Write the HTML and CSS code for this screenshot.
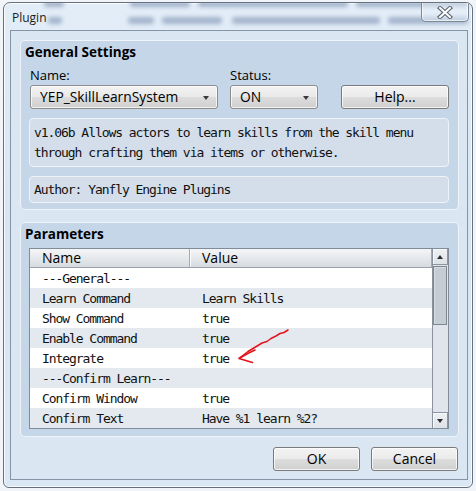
FILE: index.html
```html
<!DOCTYPE html>
<html>
<head>
<meta charset="utf-8">
<title>Plugin</title>
<link rel="stylesheet" href="styles.css">
</head>
<body>
<div class="window">
  <!-- the desktop behind, smeared by the glass title bar -->
  <div class="backdrop" aria-hidden="true">
    <span class="smudge s1"></span>
    <span class="smudge s2"></span>
    <span class="smudge s3"></span>
    <span class="smudge s4"></span>
    <span class="smudge s5"></span>
    <span class="smudge s6"></span>
    <span class="smudge s7"></span>
    <span class="smudge s8"></span>
    <span class="smudge s9"></span>
  </div>

  <div class="titlebar">
    <span class="title">Plugin</span>
  </div>
  <div class="close">
    <svg width="16" height="13" viewBox="0 0 16 13">
      <path d="M3 2 L13 11 M13 2 L3 11" stroke="#5d6671" stroke-width="4.2" stroke-linecap="square" fill="none"/>
      <path d="M3 2 L13 11 M13 2 L3 11" stroke="#ffffff" stroke-width="2" stroke-linecap="square" fill="none"/>
    </svg>
  </div>

  <div class="client">
    <section class="group general">
      <h2>General Settings</h2>
      <div class="fields">
        <div class="field f-name">
          <label>Name:</label>
          <div class="combo">YEP_SkillLearnSystem<span class="caret"></span></div>
        </div>
        <div class="field f-status">
          <label>Status:</label>
          <div class="combo">ON<span class="caret"></span></div>
        </div>
        <button class="btn help">Help...</button>
      </div>
      <div class="textbox desc">v1.06b Allows actors to learn skills from the skill menu<br>through crafting them via items or otherwise.</div>
      <div class="textbox author">Author: Yanfly Engine Plugins</div>
    </section>

    <section class="group params">
      <h2>Parameters</h2>
      <div class="table">
        <div class="grid">
          <div class="row head"><div class="cell">Name</div><div class="cell">Value</div></div>
          <div class="row"><div class="cell">---General---</div><div class="cell"></div></div>
          <div class="row alt"><div class="cell">Learn Command</div><div class="cell">Learn Skills</div></div>
          <div class="row"><div class="cell">Show Command</div><div class="cell">true</div></div>
          <div class="row alt"><div class="cell">Enable Command</div><div class="cell">true</div></div>
          <div class="row"><div class="cell">Integrate</div><div class="cell">true</div></div>
          <div class="row alt"><div class="cell">---Confirm Learn---</div><div class="cell"></div></div>
          <div class="row"><div class="cell">Confirm Window</div><div class="cell">true</div></div>
          <div class="row alt"><div class="cell">Confirm Text</div><div class="cell">Have %1 learn %2?</div></div>
        </div>
        <div class="scrollbar">
          <div class="sb-btn"><span class="tri up"></span></div>
          <div class="sb-thumb"></div>
          <div class="sb-track"></div>
          <div class="sb-btn"><span class="tri down"></span></div>
        </div>
      </div>
    </section>

    <div class="actions">
      <button class="btn">OK</button>
      <button class="btn">Cancel</button>
    </div>
  </div>
</div>

<!-- hand-drawn red marker pointing at the Integrate value -->
<svg class="marker" width="476" height="491" viewBox="0 0 476 491">
  <path d="M288 330 L284 332.5 L280 333.5 L276 336 L271 338.5 L267 341.5 L262 343 L258 345.5 L253 348.5 L248 351.5 L243.5 355 L239.5 358"
        stroke="#e3141b" stroke-width="1.5" fill="none" stroke-linejoin="round" stroke-linecap="round"/>
  <path d="M255 350 Q248 353 239 358.5 L252.5 362.5" stroke="#e3141b" stroke-width="1.6" fill="none" stroke-linejoin="round" stroke-linecap="round"/>
</svg>
</body>
</html>
```

FILE: styles.css
```css
* {
  box-sizing: border-box;
}

html,
body {
  margin: 0;
  padding: 0;
}

body {
  width: 476px;
  height: 491px;
  overflow: hidden;
  position: relative;
  background: #f1f4f8;
  font-family: "Open Sans", "Noto Sans", sans-serif;
  color: #000;
}

/* ---------- window frame ---------- */

.window {
  position: relative;
  margin: 2px 0 0 3px;
  width: 470px;
  height: 486px;
  padding: 0 4px 7px 6px;
  display: flex;
  flex-direction: column;
  border: 1px solid #65717e;
  border-radius: 7px 7px 6px 6px;
  background: linear-gradient(180deg, #e3edf8 0%, #d7e5f3 45%, #dae7f4 100%);
  box-shadow: inset 0 0 0 1px rgba(255, 255, 255, 0.8);
  overflow: hidden;
}

.backdrop {
  position: absolute;
  left: 0;
  top: 0;
  width: 100%;
  height: 27px;
  overflow: hidden;
}

/* blurred lines of the window underneath */
.smudge {
  position: absolute;
  height: 7px;
  border-radius: 3px;
  background: #4f6890;
  opacity: 0.42;
  filter: blur(2.2px);
}

.s1 { left: 40px;  top: -3px; width: 20px; }
.s2 { left: 126px; top: -3px; width: 60px; }
.s3 { left: 194px; top: -3px; width: 150px; }
.s4 { left: 352px; top: -3px; width: 112px; }
.s5 { left: 44px;  top: 14px; width: 14px; }
.s6 { left: 124px; top: 14px; width: 26px; }
.s7 { left: 158px; top: 14px; width: 60px; }
.s8 { left: 228px; top: 14px; width: 148px; }
.s9 { left: 384px; top: 14px; width: 80px; }

.titlebar {
  position: relative;
  height: 27px;
  flex: none;
}

.title {
  display: block;
  padding-left: 2px;
  font-size: 12px;
  line-height: 29px;
  color: #1b1b1b;
}

.close {
  position: absolute;
  top: -1px;
  right: 3px;
  width: 48px;
  height: 20px;
  display: flex;
  align-items: center;
  justify-content: center;
  border: 1px solid #7c8896;
  border-top: none;
  border-radius: 0 0 5px 5px;
  background: linear-gradient(180deg, rgba(255, 255, 255, 0.35), rgba(220, 232, 245, 0.55));
  box-shadow: inset 0 0 0 1px rgba(255, 255, 255, 0.6);
}

.close svg {
  display: block;
  margin-top: 1px;
}

/* ---------- client area ---------- */

.client {
  height: 450px;
  flex: none;
  padding: 9px 8px 8px 9px;
  display: flex;
  flex-direction: column;
  border: 1px solid #8595a6;
  background: #dae6f2;
}

.group {
  border: 1px solid #eef4fa;
  border-radius: 5px;
  background: #c5d6e9;
  padding: 1px 9px 6px 8px;
}

.group h2 {
  margin: 0 0 0 -4px;
  height: 20px;
  font-size: 13.5px;
  font-weight: 700;
  line-height: 20px;
}

/* ---------- general settings ---------- */

.fields {
  display: flex;
}

.field label {
  display: block;
  margin-top: 5px;
  padding-left: 1px;
  font-size: 13px;
  line-height: 16px;
}

.f-name {
  width: 189px;
}

.f-status {
  width: 89px;
  margin-left: 11px;
}

.combo {
  position: relative;
  margin: 2px 0 0 1px;
  height: 24px;
  padding-left: 9px;
  border: 1px solid #8d8d8d;
  border-radius: 3px;
  background: linear-gradient(180deg, #f3f3f3 0%, #e9e9e9 48%, #dcdcdc 52%, #d0d0d0 100%);
  box-shadow: inset 0 0 0 1px rgba(255, 255, 255, 0.7);
  font-size: 13.8px;
  line-height: 22px;
}

.caret {
  position: absolute;
  right: 8px;
  top: 10px;
  width: 0;
  height: 0;
  border-left: 3.5px solid transparent;
  border-right: 3.5px solid transparent;
  border-top: 4px solid #3a3a3a;
}

.btn {
  height: 24px;
  padding: 0;
  border: 1px solid #7a7a7a;
  border-radius: 3px;
  background: linear-gradient(180deg, #f3f3f3 0%, #ebebeb 48%, #dddddd 52%, #cfcfcf 100%);
  box-shadow: inset 0 0 0 1px rgba(255, 255, 255, 0.75);
  font-family: "Open Sans", "Noto Sans", sans-serif;
  font-size: 14px;
  line-height: 22px;
  color: #000;
}

.help {
  width: 108px;
  margin-left: 23px;
  align-self: flex-end;
}

.textbox {
  padding: 4px 4px 0 4px;
  border: 1px solid #eef3f8;
  border-radius: 4px;
  background: #d3deea;
  font-family: "DejaVu Sans Mono", monospace;
  font-size: 13px;
  letter-spacing: -1.06px;
  line-height: 19.5px;
  white-space: nowrap;
  color: #111;
}

.desc {
  margin-top: 9px;
  height: 49px;
}

.author {
  margin-top: 9px;
  height: 27px;
  padding-top: 3px;
}

/* ---------- parameters ---------- */

.params {
  margin-top: 12px;
  padding-bottom: 7px;
}

.table {
  margin-top: 4px;
  height: 181px;
  display: flex;
  border: 1px solid #808c99;
  background: #ffffff;
}

.grid {
  flex: 1;
  overflow: hidden;
}

.row {
  display: grid;
  grid-template-columns: 160px 1fr;
  height: 20px;
  font-family: "DejaVu Sans Mono", monospace;
  font-size: 13px;
  letter-spacing: -1.06px;
  white-space: nowrap;
  color: #111;
}

.row .cell {
  padding: 1px 0 0 12px;
  line-height: 19px;
}

.row .cell + .cell {
  padding-left: 12px;
}

.row.alt {
  background: #e3e9ef;
}

.row.head {
  height: 19px;
  border-bottom: 1px solid #97a2ae;
  background: linear-gradient(180deg, #f4f5f6 0%, #e6e9ec 50%, #d6dbe0 100%);
  font-family: "Open Sans", "Noto Sans", sans-serif;
  font-size: 14px;
  letter-spacing: 0;
  color: #000;
}

.row.head .cell {
  padding-top: 0;
  line-height: 18px;
  border-right: 1px solid #a3acb6;
  box-shadow: inset 1px 0 0 rgba(255, 255, 255, 0.8);
}

.row.head .cell:first-child {
  box-shadow: none;
}

.scrollbar {
  width: 16px;
  display: flex;
  flex-direction: column;
  border-left: 1px solid #8a939d;
  background: #dfe5eb;
}

.sb-btn {
  height: 16px;
  flex: none;
  display: flex;
  align-items: center;
  justify-content: center;
  border: 1px solid #8d96a0;
  border-left: none;
  background: linear-gradient(180deg, #eef1f4 0%, #dde2e7 100%);
  box-shadow: inset 1px 1px 0 #f8f9fa;
}

.sb-btn:first-child {
  border-top: none;
}

.sb-btn:last-child {
  border-bottom: none;
}

.sb-thumb {
  height: 59px;
  flex: none;
  margin: 1px 1px 0 0;
  border: 1px solid #7e8790;
  background: #c4ccd4;
  box-shadow: inset 1px 1px 0 #d6dce2;
}

.sb-track {
  flex: 1;
}

.tri {
  width: 0;
  height: 0;
  border-left: 3.5px solid transparent;
  border-right: 3.5px solid transparent;
}

.tri.up {
  border-bottom: 4px solid #2c2c2c;
}

.tri.down {
  border-top: 4px solid #2c2c2c;
}

/* ---------- dialog buttons ---------- */

.actions {
  margin-top: 10px;
  padding-right: 1px;
  display: flex;
  justify-content: flex-end;
  gap: 11px;
}

.actions .btn {
  width: 87px;
}

/* ---------- annotation ---------- */

.marker {
  position: absolute;
  left: 0;
  top: 0;
  pointer-events: none;
}
```
